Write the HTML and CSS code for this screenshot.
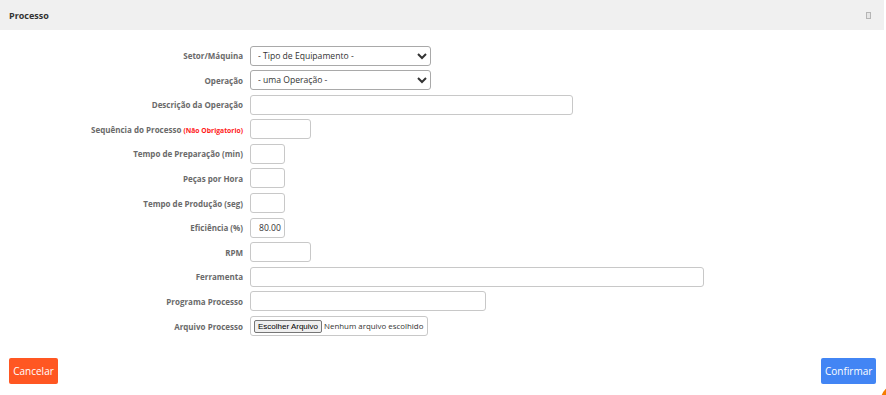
FILE: index.html
```html
<!DOCTYPE html>
<html lang="pt">
<head>
    <meta charset="UTF-8">
    <title>Processo</title>
    <link rel="stylesheet" href="styles.css">
</head>
<body>
    <header class="panel-head">
        <h1>Processo</h1>
        <span class="panel-toggle"></span>
    </header>
    <form class="process-form">
        <label>Setor/Máquina</label>
        <select class="field w-select"><option>- Tipo de Equipamento -</option></select>

        <label>Operação</label>
        <select class="field w-select"><option>- uma Operação -</option></select>

        <label>Descrição da Operação</label>
        <input class="field w-long" type="text">

        <label>Sequência do Processo <span class="optional">(Não Obrigatorio)</span></label>
        <input class="field w-mid" type="text">

        <label>Tempo de Preparação (min)</label>
        <input class="field w-small" type="text">

        <label>Peças por Hora</label>
        <input class="field w-small" type="text">

        <label>Tempo de Produção (seg)</label>
        <input class="field w-small" type="text">

        <label>Eficiência (%)</label>
        <input class="field w-small" type="text" value="80.00">

        <label>RPM</label>
        <input class="field w-mid" type="text">

        <label>Ferramenta</label>
        <input class="field w-xl" type="text">

        <label>Programa Processo</label>
        <input class="field w-prog" type="text">

        <label>Arquivo Processo</label>
        <div class="field file-box">
            <span class="file-btn">Escolher Arquivo</span>
            <span class="file-name">Nenhum arquivo escolhido</span>
        </div>
    </form>
    <footer class="actions">
        <button class="btn btn-cancel" type="button">Cancelar</button>
        <button class="btn btn-confirm" type="button">Confirmar</button>
    </footer>
    <div class="fab-corner"><span class="fab"></span></div>
</body>
</html>
```

FILE: styles.css
```css
* {
    box-sizing: border-box;
}

html {
    overflow: hidden;
}

body {
    margin: 0;
    font-family: "Open Sans", sans-serif;
    color: #555;
    background: #fff;
    height: 395px;
    overflow: hidden;
    position: relative;
}

.panel-head {
    height: 30px;
    margin-right: 2px;
    background: #f0f0f0;
    display: flex;
    align-items: center;
    justify-content: space-between;
    padding: 0 13px 0 9px;
}

.panel-head h1 {
    margin: 0;
    font-size: 9px;
    font-weight: 700;
    color: #333;
}

.panel-toggle {
    width: 5px;
    height: 7px;
    border: 1px solid #b5b5b5;
    background: #e6e6e6;
}

.process-form {
    display: grid;
    grid-template-columns: 243px auto;
    column-gap: 7px;
    row-gap: 4.6px;
    justify-items: start;
    align-items: center;
    padding-top: 15.5px;
}

.process-form label {
    justify-self: end;
    font-size: 8px;
    font-weight: 700;
    color: #6a6a6a;
    white-space: nowrap;
}

.optional {
    color: #ff1a1a;
    font-size: 6.8px;
    font-weight: 700;
}

.field {
    height: 20px;
    border: 1px solid #c8c8c8;
    border-radius: 3px;
    background: #fff;
    font-family: "Open Sans", sans-serif;
    font-size: 8.6px;
    color: #333;
    padding: 0 8px;
    outline: none;
}

select.field {
    border-color: #a9a9a9;
    padding: 0 3px;
}

.w-select { width: 181px; }
.w-long { width: 323px; }
.w-mid { width: 61px; }
.w-small { width: 35px; padding-right: 1px; }
.w-xl { width: 454px; }
.w-prog { width: 236px; }

.file-box {
    width: 178px;
    display: flex;
    align-items: center;
    gap: 2px;
    padding: 0 3px;
    overflow: hidden;
}

.file-btn {
    font-family: "Liberation Sans", sans-serif;
    font-size: 8px;
    color: #000;
    background: #efefef;
    border: 1px solid #767676;
    border-radius: 2px;
    padding: 0 3px;
    line-height: 11px;
    white-space: nowrap;
}

.file-name {
    font-size: 7.9px;
    color: #333;
    white-space: nowrap;
}

.actions {
    display: flex;
    justify-content: space-between;
    padding: 22px 10px 0 9px;
}

.btn {
    height: 26px;
    border: none;
    border-radius: 2px;
    color: #fff;
    font-family: "Open Sans", sans-serif;
    font-size: 10px;
    font-weight: 500;
    padding: 0 4px;
}

.btn-cancel {
    background: #ff5722;
    width: 49px;
}

.btn-confirm {
    background: #4285f4;
    width: 55px;
}

.fab-corner {
    position: absolute;
    right: 0;
    bottom: 0;
    width: 6px;
    height: 12px;
    overflow: hidden;
}

.fab {
    display: block;
    width: 40px;
    height: 40px;
    border-radius: 50%;
    background: #f57c00;
}
```
